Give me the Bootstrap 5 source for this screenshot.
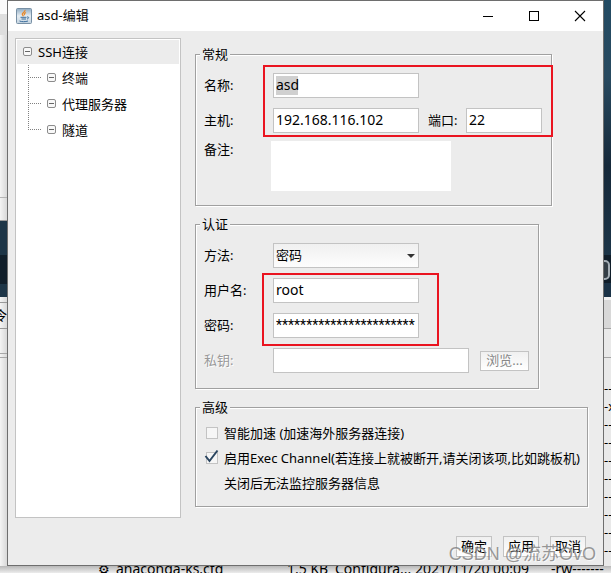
<!DOCTYPE html>
<html lang="zh-CN">
<head>
<meta charset="utf-8">
<meta name="viewport" content="width=device-width, initial-scale=1">
<title>asd-编辑</title>
<link href="https://cdn.jsdelivr.net/npm/bootstrap@5.3.0/dist/css/bootstrap.min.css" rel="stylesheet">
<style>
  :root { --face: #ececec; --line: #c3c3c3; --etch: #a0a0a0; --ui: "Noto Sans", "Noto Sans CJK SC", sans-serif; }
  body { font: 13px/16px var(--ui); color: #000; background: #f0f0f0; }
  button, input, select, textarea { font-family: var(--ui); }
  .desktop { display: grid; grid-template-columns: 7px minmax(0, 1fr) 7px; grid-template-rows: 1fr 7px; }

  /* windows showing behind the dialog */
  .edge { overflow: hidden; white-space: nowrap; }
  .edge-left { background: linear-gradient(90deg, #f4f4f4, #d8d8d8); }
  .edge-right { background: #e9e9e9; }
  .edge-bottom { grid-column: 1 / -1; background: linear-gradient(#b8b8b8, #ececec); font-size: 14px; line-height: 6px; }
  .strip { flex: none; overflow: hidden; }
  .s-white { height: 14px; background: #fafafa; }
  .s-gray { height: 21px; background: #dedede; }
  .s-tall { height: 163px; border-bottom: 1px solid #b5b5b5; }
  .s-short { height: 23px; border-bottom: 1px solid #999; }
  .s-sea { height: 34px; background: #1d3547; }
  .s-deep { height: 29px; background: #101e2a; }
  .s-sea-low { height: 13px; background: #1d3547; }
  .s-gap { height: 6px; border-bottom: 1px solid #999; }
  .s-tab { height: 26px; border-bottom: 1px solid #999; line-height: 24px; direction: rtl; }
  .s-line { height: 25px; border-bottom: 1px solid #a8a8a8; }
  .s-thin { height: 4px; border-bottom: 1px solid #a8a8a8; }
  .r-sea { height: 255px; background: linear-gradient(#234b63, #284a60 30%, #16293a 65%, #1c3548); }
  .r-deep { height: 28px; background: #101e2a; }
  .r-sea-low { height: 14px; background: #1b3347; }
  .r-tab { height: 32px; border-top: 3px solid #f2f2f2; border-bottom: 1px solid #a5a5a5; background: #d8d8d8; }
  .r-head { height: 29px; border-bottom: 1px solid #a5a5a5; }
  .r-row { height: 18px; line-height: 18px; }
  .r-list { padding-top: 21px; }
  .chip { width: 12px; height: 20px; margin: 5px 0 0 -6px; border: 2px solid #a4adb4; border-radius: 5px; background: #343e46; }
  .file-gear { width: 116px; padding-left: 98px; font-size: 13px; }
  .file-name { width: 171px; }
  .file-size { width: 48px; }
  .file-kind { width: 80px; }
  .file-date { width: 136px; }

  /* dialog */
  .dialog { background: var(--face); border: 1px solid #6e6e6e; }
  .title-bar { height: 30px; padding-left: 8px; background: #fff; }
  .title-text { padding: 0 0 2px 5px; }
  .win-btn { width: 46px; height: 30px; padding: 0 0 1px; border: 0; background: none; }
  .tree-pane { flex: 0 0 166px; margin: 7px 14px 47px 7px; border: 1px solid var(--line); background: #fff; padding: 1px; }
  .tree-root { height: 24px; padding-left: 6px; gap: 5px; background: var(--face); }
  .tree-kids { margin: 1px 0 0 11px; }
  .tree-kid { height: 26px; gap: 5px; }

  .group-box { min-width: 0; padding: 11px 0 14px 8px; border: 1px solid var(--etch); box-shadow: 1px 1px 0 #fff, inset 1px 1px 0 #fff; }
  .group-box > legend { float: none; width: auto; margin: 0 0 0 -4px; padding: 0 2px; font-size: 13px; line-height: 16px; background: var(--face); }
  .groups { padding-top: 15px; }
  .mr-general { margin-right: 51px; }
  .mr-auth { margin-right: 64px; padding-bottom: 15px; }
  .mr-adv { margin-right: 15px; }
  .group-gap { margin-top: 10px; }
  .rows { gap: 10px; }
  .cap { flex: 0 0 69px; padding-bottom: 2px; }
  .cap-port { flex: 0 0 38px; margin-left: 9px; padding-bottom: 2px; }
  .field { height: 25px; padding: 0 2px 2px; border: 1px solid var(--line); border-radius: 0; background: #fff; font-size: 14px; line-height: 20px; color: #000; outline: 0; }
  .w-main { width: 146px; }
  .w-port { width: 76px; }
  .w-key { width: 196px; }
  .picked { position: relative; }
  .field-name { background: linear-gradient(#d0d0d0, #d0d0d0) 2px 2px / 22px 19px no-repeat #fff; }
  .field-secret { font-family: Roboto, sans-serif; }
  .note { display: block; width: 180px; height: 50px; margin-left: -2px; border: 0; background: #fff; resize: none; }
  .note-row { margin-top: 8px; }
  .drop { position: relative; }
  .drop select { appearance: none; font-size: 13px; background: linear-gradient(#f0f0f0, #fdfdfd); }
  .drop svg { position: absolute; right: 4px; top: 11px; pointer-events: none; }
  .dim { color: #999; text-shadow: 1px 1px 0 #fff; }
  .push { padding: 0 0 2px; border: 1px solid var(--line); background: linear-gradient(#f0f0f0, #fff); font-size: 13px; line-height: 16px; height: 20px; color: #000; }
  .push-browse { width: 49px; margin-left: 11px; color: #888; }
  .push-foot { width: 36px; height: 21px; }
  .foot { gap: 11px; margin: 29px 17px 7px 0; }
  .callout { position: absolute; border: 2px solid #ea1420; pointer-events: none; }
  .callout-host { top: -8px; bottom: -4px; left: 59px; right: -2px; }
  .callout-user { top: -5px; bottom: -8px; left: 58px; width: 177px; }

  .adv-box { padding: 5px 0 11px 8px; }
  .opt { height: 25px; }
  .tick { position: relative; flex: 0 0 20px; height: 16px; }
  .tick input { appearance: none; display: block; width: 12px; height: 12px; margin: 2px; border: 1px solid var(--line); background: #f6f6f6; }
  .tick svg { position: absolute; left: 0; top: -1px; pointer-events: none; }
  .opt-note { padding-left: 20px; }
  .stamp { position: absolute; right: 15px; bottom: 9px; font: 18px/20px "Liberation Sans", "Noto Sans CJK SC", sans-serif; color: rgba(120, 120, 120, .75); text-shadow: 1px 1px 0 rgba(255, 255, 255, .6); white-space: nowrap; }
</style>
<script src="https://cdn.jsdelivr.net/npm/bootstrap@5.3.0/dist/js/bootstrap.bundle.min.js"></script>
</head>
<body>
<div class="desktop min-vh-100 position-relative">

  <div class="edge edge-left d-flex flex-column" aria-hidden="true">
    <div class="strip s-white"></div><div class="strip s-gray"></div><div class="strip s-tall"></div>
    <div class="strip s-short"></div><div class="strip s-sea"></div><div class="strip s-deep"></div>
    <div class="strip s-sea-low"></div><div class="strip s-gap"></div><div class="strip s-tab">令</div>
    <div class="strip s-line"></div><div class="strip s-thin"></div>
  </div>

  <main class="dialog d-flex flex-column">
    <header class="title-bar d-flex align-items-center">
      <svg width="16" height="16" viewBox="0 0 16 16" aria-hidden="true">
        <defs><linearGradient id="tile" x1="0" y1="0" x2="0" y2="1"><stop offset="0" stop-color="#8fabc2"/><stop offset=".5" stop-color="#e6edf2"/><stop offset="1" stop-color="#c2d2df"/></linearGradient></defs>
        <rect x=".5" y=".5" width="15" height="15" rx="1" fill="url(#tile)" stroke="#7890a5"/>
        <path d="M9 2C9.600 4 6 4.700 6.300 6.300 6.500 7.300 7.300 7.700 7.500 8.300M10 4.500C8.200 5.400 8 6.200 8.700 7.200" fill="none" stroke="#e8892a" stroke-width="1.300"/>
        <path d="M4.500 9.300h6M5.500 11h4.500M3.500 13c2 .9 6 .9 8.500 0M11 9c2.200-.6 2.200 1.500 0 2" fill="none" stroke="#3c6e9c" stroke-width="1"/>
      </svg>
      <span class="title-text me-auto">asd-编辑</span>
      <button class="win-btn" type="button" aria-label="最小化"><svg class="d-block m-auto" width="12" height="12" viewBox="0 0 12 12"><path d="M1 6.500h10" stroke="#000"/></svg></button>
      <button class="win-btn" type="button" aria-label="最大化"><svg class="d-block m-auto" width="12" height="12" viewBox="0 0 12 12"><rect x="1.500" y="1.500" width="9" height="9" fill="none" stroke="#000"/></svg></button>
      <button class="win-btn" type="button" aria-label="关闭"><svg class="d-block m-auto" width="12" height="12" viewBox="0 0 12 12"><path d="M1 1l10 10M11 1L1 11" stroke="#000" stroke-width="1.100"/></svg></button>
    </header>

    <div class="d-flex flex-grow-1">
      <nav class="tree-pane" aria-label="设置">
        <svg class="d-none" aria-hidden="true">
          <symbol id="node" viewBox="0 0 10 10"><rect x=".5" y=".5" width="8" height="8" rx="1.500" fill="#f8f8f8" stroke="#8c8c8c"/><path d="M2 4.500h5" stroke="#666"/></symbol>
          <symbol id="mid" viewBox="0 0 19 26"><path d="M.5 0v26M0 12.500h13" stroke="#808080" stroke-dasharray="1 1" fill="none"/></symbol>
          <symbol id="end" viewBox="0 0 19 26"><path d="M.5 0v13M0 12.500h13" stroke="#808080" stroke-dasharray="1 1" fill="none"/></symbol>
        </svg>
        <div class="tree-root d-flex align-items-center"><svg width="10" height="10"><use href="#node"/></svg><span>SSH连接</span></div>
        <ul class="tree-kids list-unstyled mb-0">
          <li class="tree-kid d-flex align-items-center"><span class="d-flex align-items-center"><svg width="19" height="26"><use href="#mid"/></svg><svg width="10" height="10"><use href="#node"/></svg></span><span>终端</span></li>
          <li class="tree-kid d-flex align-items-center"><span class="d-flex align-items-center"><svg width="19" height="26"><use href="#mid"/></svg><svg width="10" height="10"><use href="#node"/></svg></span><span>代理服务器</span></li>
          <li class="tree-kid d-flex align-items-center"><span class="d-flex align-items-center"><svg width="19" height="26"><use href="#end"/></svg><svg width="10" height="10"><use href="#node"/></svg></span><span>隧道</span></li>
        </ul>
      </nav>

      <form class="groups flex-grow-1">
        <fieldset class="group-box mr-general">
          <legend>常规</legend>
          <div class="rows picked d-flex flex-column">
            <div class="d-flex align-items-center"><label class="cap" for="name">名称:</label><input class="field field-name w-main" id="name" value="asd"></div>
            <div class="d-flex align-items-center"><label class="cap" for="host">主机:</label><input class="field w-main" id="host" value="192.168.116.102"><label class="cap-port" for="port">端口:</label><input class="field w-port" id="port" value="22"></div>
            <div class="callout callout-host" aria-hidden="true"></div>
          </div>
          <div class="note-row d-flex"><label class="cap" for="note">备注:</label><textarea class="note" id="note"></textarea></div>
        </fieldset>

        <fieldset class="group-box group-gap mr-auth">
          <legend>认证</legend>
          <div class="rows d-flex flex-column">
            <div class="d-flex align-items-center"><label class="cap" for="method">方法:</label><span class="drop d-flex"><select class="field w-main" id="method"><option>密码</option></select><svg width="8" height="4" viewBox="0 0 8 4" aria-hidden="true"><path d="M0 0h8L4 4z" fill="#333"/></svg></span></div>
            <div class="rows picked d-flex flex-column">
              <div class="d-flex align-items-center"><label class="cap" for="user">用户名:</label><input class="field w-main" id="user" value="root"></div>
              <div class="d-flex align-items-center"><label class="cap" for="secret">密码:</label><input class="field field-secret w-main" id="secret" value="***********************"></div>
              <div class="callout callout-user" aria-hidden="true"></div>
            </div>
            <div class="d-flex align-items-center"><label class="cap dim" for="key">私钥:</label><input class="field w-key" id="key" disabled><button class="push push-browse dim" type="button" disabled>浏览...</button></div>
          </div>
        </fieldset>

        <fieldset class="group-box adv-box group-gap mr-adv">
          <legend>高级</legend>
          <div class="opt d-flex align-items-center"><span class="tick"><input type="checkbox" id="boost"></span><label for="boost">智能加速 (加速海外服务器连接)</label></div>
          <div class="opt d-flex align-items-center"><span class="tick"><input type="checkbox" id="exec" checked><svg width="15" height="15" viewBox="0 0 15 15" aria-hidden="true"><path d="M1.500 7L5.500 12 13.500 1.500" fill="none" stroke="#2a4560" stroke-width="2"/></svg></span><label class="text-nowrap" for="exec">启用Exec Channel(若连接上就被断开,请关闭该项,比如跳板机)</label></div>
          <div class="opt opt-note d-flex align-items-center">关闭后无法监控服务器信息</div>
        </fieldset>

        <div class="foot d-flex justify-content-end">
          <button class="push push-foot" type="button">确定</button>
          <button class="push push-foot" type="button">应用</button>
          <button class="push push-foot" type="button">取消</button>
        </div>
      </form>
    </div>
  </main>

  <div class="edge edge-right d-flex flex-column" aria-hidden="true">
    <div class="strip r-sea"></div><div class="strip r-deep"><div class="chip"></div></div><div class="strip r-sea-low"></div>
    <div class="strip r-tab"></div><div class="strip r-head"></div>
    <div class="r-list">
      <div class="r-row">---</div><div class="r-row">-x-</div><div class="r-row">---</div><div class="r-row">---</div><div class="r-row">---</div>
      <div class="r-row">---</div><div class="r-row">---</div><div class="r-row">---</div><div class="r-row">---</div><div class="r-row">---</div>
    </div>
  </div>

  <div class="edge edge-bottom d-flex" aria-hidden="true">
    <span class="file-gear">⚙</span>
    <span class="file-name">anaconda-ks.cfg</span>
    <span class="file-size">1.5 KB</span><span class="file-kind">Configura...</span>
    <span class="file-date">2021/11/20 00:09</span><span>-rw-------</span>
  </div>

  <div class="stamp">CSDN @流苏OvO</div>
</div>
</body>
</html>
